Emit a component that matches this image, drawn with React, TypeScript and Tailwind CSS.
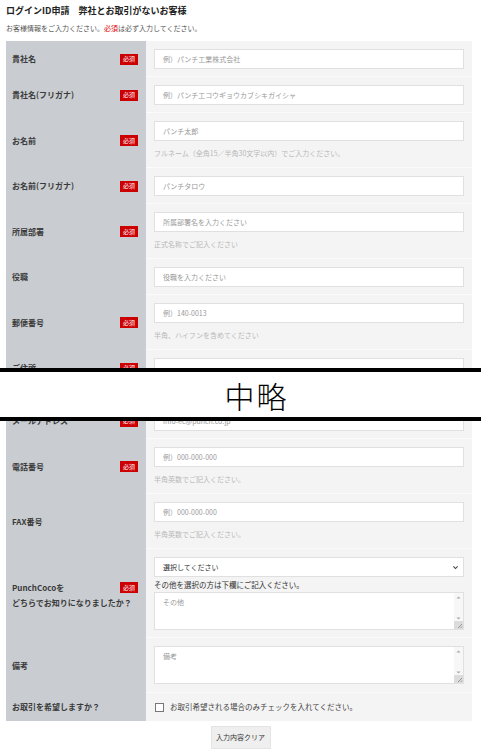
import React from "react";

const FONT = { fontFamily: '"Noto Sans CJK JP", "Noto Sans", sans-serif' };

function Badge() {
  return (
    <span className="flex h-[11px] w-[18px] shrink-0 items-center justify-center bg-[#cc0000] text-[6px] leading-none text-white">
      必須
    </span>
  );
}

function Label({ text, required }: { text: string; required?: boolean }) {
  return (
    <div className="flex w-[140px] shrink-0 items-center justify-between bg-[#c9cdd1] pl-[6px] pr-[8px]">
      <span className="whitespace-nowrap text-[8px] font-bold leading-[10px] text-[#3a3a3a]">{text}</span>
      {required && <Badge />}
    </div>
  );
}

function TextInput({ placeholder }: { placeholder: string }) {
  return (
    <input
      type="text"
      placeholder={placeholder}
      className="block h-5 w-full border border-[#e0e0e0] bg-white px-[8px] text-[7px] text-[#333] outline-none placeholder:text-[#9a9a9a]"
    />
  );
}

function Help({ text }: { text: string }) {
  return <div className="mb-[2px] mt-[7px] text-[7px] leading-[10px] text-[#b8b8b8]">{text}</div>;
}

function Row({
  label,
  required,
  placeholder,
  help,
  className = "",
}: {
  label: string;
  required?: boolean;
  placeholder: string;
  help?: string;
  className?: string;
}) {
  return (
    <div className={"flex " + className}>
      <Label text={label} required={required} />
      <div className="flex-1 border-b border-[#fbfbfb] bg-[#f4f4f4] pb-[7px] pl-[8px] pr-[8px] pt-[8px]">
        <TextInput placeholder={placeholder} />
        {help && <Help text={help} />}
      </div>
    </div>
  );
}

function FakeTextarea({ placeholder }: { placeholder: string }) {
  return (
    <div className="relative h-[38px] w-full">
      <textarea
        placeholder={placeholder}
        className="block h-full w-full resize-none border border-[#e0e0e0] bg-white px-[8px] py-[4px] text-[7px] text-[#333] outline-none placeholder:text-[#9a9a9a]"
      />
      <div className="pointer-events-none absolute bottom-[1px] right-[1px] top-[1px] flex w-[9px] flex-col items-center justify-between bg-[#f7f7f7]">
        <svg width="5" height="5" viewBox="0 0 5 5" className="mt-[2px]">
          <path d="M0.5 3.5 L2.5 1.5 L4.5 3.5 Z" fill="#a8a8a8" />
        </svg>
        <div className="flex w-full flex-col items-center">
          <svg width="5" height="5" viewBox="0 0 5 5">
            <path d="M0.5 1.5 L2.5 3.5 L4.5 1.5 Z" fill="#a8a8a8" />
          </svg>
          <div className="flex h-[8px] w-full items-end justify-end bg-[#dcdcdc]">
            <svg width="8" height="8" viewBox="0 0 8 8">
              <path d="M7 3 L3 7 M7 5.5 L5.5 7" stroke="#888" strokeWidth="0.8" />
            </svg>
          </div>
        </div>
      </div>
    </div>
  );
}

export default function App() {
  return (
    <div className="relative w-[481px] bg-white" style={FONT}>
      {/* top section */}
      <div className="h-[368px] overflow-hidden">
        <div className="px-[6px]">
          <h1 className="mt-[5px] text-[9px] font-bold leading-[12px] text-[#222]">
            ログインID申請　弊社とお取引がないお客様
          </h1>
          <p className="mt-[6px] text-[7px] leading-[10px] text-[#555]">
            お客様情報をご入力ください。<span className="text-[#e00000]">必須</span>は必ず入力してください。
          </p>
          <div className="mt-[8px] w-[466px]">
            <Row label="貴社名" required placeholder="例）パンチ工業株式会社" />
            <Row label="貴社名(フリガナ)" required placeholder="例）パンチ工コウギョウカブシキガイシャ" />
            <Row
              label="お名前"
              required
              placeholder="パンチ太郎"
              help="フルネーム（全角15／半角30文字以内）でご入力ください。"
            />
            <Row label="お名前(フリガナ)" required placeholder="パンチタロウ" />
            <Row label="所属部署" required placeholder="所属部署名を入力ください" help="正式名称でご記入ください" />
            <Row label="役職" placeholder="役職を入力ください" />
            <Row label="郵便番号" required placeholder="例）140-0013" help="半角、ハイフンを含めてください" />
            <Row label="ご住所" required placeholder="" />
          </div>
        </div>
      </div>

      {/* omission band */}
      <div className="h-[4px] w-full bg-black" />
      <div className="flex h-[45px] items-center justify-center bg-white pl-[32px]">
        <span className="text-[30px] font-light leading-none tracking-[2px] text-black">中略</span>
      </div>
      <div className="h-[4px] w-full bg-black" />

      {/* bottom section */}
      <div className="overflow-hidden px-[6px] pb-[5px]">
        <div className="w-[466px]">
          <Row label="メールアドレス" required placeholder="info-ec@punch.co.jp" className="-mt-[18px]" />
          <Row label="電話番号" required placeholder="例）000-000-000" help="半角英数でご記入ください。" />
          <Row label="FAX番号" placeholder="例）000-000-000" help="半角英数でご記入ください。" />

          <div className="flex">
            <div className="flex w-[140px] shrink-0 flex-col justify-center bg-[#c9cdd1] pl-[6px] pr-[8px] pt-[3px]">
              <div className="flex h-[11px] items-center justify-between">
                <span className="whitespace-nowrap text-[8px] font-bold leading-[10px] text-[#3a3a3a]">PunchCocoを</span>
                <Badge />
              </div>
              <span className="mt-[4px] whitespace-nowrap text-[8px] font-bold leading-[11px] text-[#3a3a3a]">
                どちらでお知りになりましたか？
              </span>
            </div>
            <div className="flex-1 border-b border-[#fbfbfb] bg-[#f4f4f4] pb-[7px] pl-[8px] pr-[8px] pt-[8px]">
              <div className="flex h-5 w-full items-center justify-between border border-[#e0e0e0] bg-white pl-[8px] pr-[4px]">
                <span className="text-[7px] text-[#333]">選択してください</span>
                <svg width="7" height="7" viewBox="0 0 10 10">
                  <path d="M2 3.5 L5 6.5 L8 3.5" stroke="#444" strokeWidth="1.6" fill="none" />
                </svg>
              </div>
              <div className="flex h-[15px] items-center text-[7.5px] text-[#333]">
                その他を選択の方は下欄にご記入ください。
              </div>
              <FakeTextarea placeholder="その他" />
            </div>
          </div>

          <div className="flex">
            <Label text="備考" />
            <div className="flex-1 border-b border-[#fbfbfb] bg-[#f4f4f4] pb-[8px] pl-[8px] pr-[8px] pt-[8px]">
              <FakeTextarea placeholder="備考" />
            </div>
          </div>

          <div className="flex h-[28px]">
            <Label text="お取引を希望しますか？" />
            <div className="flex flex-1 items-center gap-[6px] bg-[#f4f4f4] pl-[9px]">
              <span className="block h-[9px] w-[9px] border border-[#777] bg-white" />
              <span className="text-[7.5px] text-[#444]">お取引希望される場合のみチェックを入れてください。</span>
            </div>
          </div>
        </div>
        <div className="mt-[5px] flex justify-center">
          <button className="h-[23px] w-[60px] border border-[#e4e4e4] bg-[#efefef] text-[7px] text-[#333]">
            入力内容クリア
          </button>
        </div>
      </div>
    </div>
  );
}
